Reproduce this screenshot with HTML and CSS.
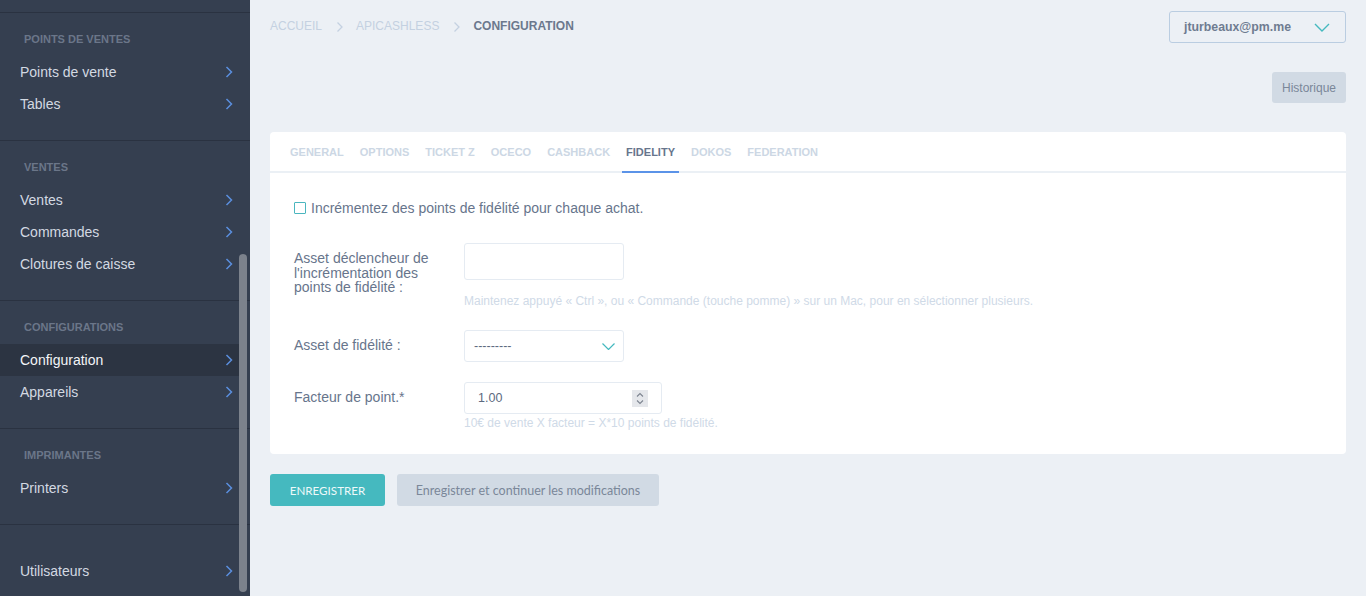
FILE: index.html
```html
<!DOCTYPE html>
<html lang="fr">
<head>
<meta charset="utf-8">
<title>Configuration</title>
<link rel="stylesheet" href="styles.css">
</head>
<body>
<div class="layout">
  <aside class="sidebar">
    <div class="sb-top"></div>
    <section class="sb-section">
      <h3 class="sb-heading">Points de ventes</h3>
      <a class="sb-item">Points de vente<svg class="chev" viewBox="0 0 8 12"><path d="M1.5 1 L6.5 6 L1.5 11"/></svg></a>
      <a class="sb-item">Tables<svg class="chev" viewBox="0 0 8 12"><path d="M1.5 1 L6.5 6 L1.5 11"/></svg></a>
    </section>
    <section class="sb-section">
      <h3 class="sb-heading">Ventes</h3>
      <a class="sb-item">Ventes<svg class="chev" viewBox="0 0 8 12"><path d="M1.5 1 L6.5 6 L1.5 11"/></svg></a>
      <a class="sb-item">Commandes<svg class="chev" viewBox="0 0 8 12"><path d="M1.5 1 L6.5 6 L1.5 11"/></svg></a>
      <a class="sb-item">Clotures de caisse<svg class="chev" viewBox="0 0 8 12"><path d="M1.5 1 L6.5 6 L1.5 11"/></svg></a>
    </section>
    <section class="sb-section">
      <h3 class="sb-heading">Configurations</h3>
      <a class="sb-item active">Configuration<svg class="chev" viewBox="0 0 8 12"><path d="M1.5 1 L6.5 6 L1.5 11"/></svg></a>
      <a class="sb-item">Appareils<svg class="chev" viewBox="0 0 8 12"><path d="M1.5 1 L6.5 6 L1.5 11"/></svg></a>
    </section>
    <section class="sb-section">
      <h3 class="sb-heading">Imprimantes</h3>
      <a class="sb-item">Printers<svg class="chev" viewBox="0 0 8 12"><path d="M1.5 1 L6.5 6 L1.5 11"/></svg></a>
    </section>
    <section class="sb-section sb-last">
      <a class="sb-item">Utilisateurs<svg class="chev" viewBox="0 0 8 12"><path d="M1.5 1 L6.5 6 L1.5 11"/></svg></a>
    </section>
    <div class="sb-scrollbar"></div>
  </aside>

  <main class="main">
    <header class="topbar">
      <nav class="breadcrumb">
        <span class="crumb">Accueil</span>
        <svg class="crumb-sep" viewBox="0 0 8 12"><path d="M1.5 1.5 L6 6 L1.5 10.5"/></svg>
        <span class="crumb">Apicashless</span>
        <svg class="crumb-sep" viewBox="0 0 8 12"><path d="M1.5 1.5 L6 6 L1.5 10.5"/></svg>
        <span class="crumb current">Configuration</span>
      </nav>
      <div class="user-menu">
        <span class="user-name">jturbeaux@pm.me</span>
        <svg class="user-chev" viewBox="0 0 16 9"><path d="M1 1 L8 8 L15 1"/></svg>
      </div>
    </header>

    <div class="actions-row">
      <button class="btn-history">Historique</button>
    </div>

    <div class="card">
      <ul class="tabs">
        <li class="tab">General</li>
        <li class="tab">Options</li>
        <li class="tab">Ticket Z</li>
        <li class="tab">Oceco</li>
        <li class="tab">Cashback</li>
        <li class="tab active">Fidelity</li>
        <li class="tab">Dokos</li>
        <li class="tab">Federation</li>
      </ul>
      <div class="card-body">
        <label class="check-row"><span class="checkbox"></span>Incrémentez des points de fidélité pour chaque achat.</label>

        <div class="field field-1">
          <div class="field-label">Asset déclencheur de l'incrémentation des points de fidélité :</div>
          <div class="field-control">
            <div class="input multi"></div>
            <div class="help help-1">Maintenez appuyé « Ctrl », ou « Commande (touche pomme) » sur un Mac, pour en sélectionner plusieurs.</div>
          </div>
        </div>

        <div class="field field-2">
          <div class="field-label">Asset de fidélité :</div>
          <div class="field-control">
            <div class="input select"><span>---------</span><svg class="sel-chev" viewBox="0 0 13 7"><path d="M0.5 0.5 L6.5 6.5 L12.5 0.5"/></svg></div>
          </div>
        </div>

        <div class="field field-3">
          <div class="field-label">Facteur de point.*</div>
          <div class="field-control">
            <div class="input number"><span>1.00</span>
              <span class="spinner"><svg viewBox="0 0 16 17"><path d="M5 6.5 L8 3.5 L11 6.5 M5 10.5 L8 13.5 L11 10.5"/></svg></span>
            </div>
            <div class="help help-3">10€ de vente X facteur = X*10 points de fidélité.</div>
          </div>
        </div>
      </div>
    </div>

    <div class="form-buttons">
      <button class="btn btn-save">ENREGISTRER</button>
      <button class="btn btn-continue">Enregistrer et continuer les modifications</button>
    </div>
  </main>
</div>
</body>
</html>
```

FILE: styles.css
```css
* { box-sizing: border-box; }
html, body { margin: 0; padding: 0; height: 100%; overflow: hidden; }
body {
  font-family: "Liberation Sans", Arial, sans-serif;
  background: #ecf0f5;
  color: #67758c;
}
.layout { display: flex; height: 596px; }

/* Sidebar */
.sidebar {
  position: relative;
  width: 250px;
  flex: 0 0 250px;
  background: #353f50;
  height: 100%;
}
.sb-top { height: 12px; }
.sb-section {
  border-top: 1px solid #2a3241;
  padding: 16px 0 20px;
  display: flex;
  flex-direction: column;
}
.sb-heading {
  margin: 0 0 7px;
  padding-left: 24px;
  height: 20px;
  line-height: 20px;
  font-size: 11px;
  font-weight: bold;
  text-transform: uppercase;
  color: #6b7689;
}
.sb-last { padding-top: 30px; }
.sb-item {
  display: flex;
  align-items: center;
  justify-content: space-between;
  height: 32px;
  padding: 0 6px 0 20px;
  font-size: 14px;
  color: #d3d9e2;
  margin-right: 11px;
}
.sb-item.active { background: #2c3442; color: #f3f5f8; }
.chev {
  width: 8px; height: 12px;
  fill: none;
  stroke: #5b8fde;
  stroke-width: 1.5;
}
.sb-scrollbar {
  position: absolute;
  left: 239px;
  top: 254px;
  width: 8px;
  height: 338px;
  background: #7c828c;
  border-radius: 4px;
}

/* Main */
.main {
  flex: 1;
  padding: 11px 20px 0;
  display: flex;
  flex-direction: column;
}
.topbar {
  display: flex;
  justify-content: space-between;
  align-items: flex-start;
}
.breadcrumb {
  display: flex;
  align-items: center;
  margin-top: 7px;
  height: 16px;
}
.crumb {
  font-size: 12px;
  text-transform: uppercase;
  color: #c4d1e1;
}
.crumb.current { font-weight: bold; color: #6b788d; }
.crumb-sep {
  width: 8px; height: 12px;
  margin: 1px 12px 0 14px;
  fill: none;
  stroke: #c4d1e1;
  stroke-width: 1.3;
}
.user-menu {
  width: 177px;
  height: 32px;
  border: 1px solid #bacde1;
  border-radius: 3px;
  display: flex;
  align-items: center;
  justify-content: space-between;
  padding: 0 15px 0 14px;
}
.user-name { font-size: 12.3px; font-weight: bold; color: #6f7c91; }
.user-chev {
  width: 16px; height: 9px;
  fill: none;
  stroke: #45b9bf;
  stroke-width: 1.4;
}

.actions-row {
  display: flex;
  justify-content: flex-end;
  margin-top: 29px;
}
.btn-history {
  width: 74px;
  height: 31px;
  border: none;
  border-radius: 3px;
  background: #d1dae4;
  color: #7a8799;
  font-family: "Liberation Sans", Arial, sans-serif;
  font-size: 12px;
  padding: 0;
}

.card {
  margin-top: 29px;
  background: #fff;
  border-radius: 4px;
}
.tabs {
  list-style: none;
  margin: 0;
  padding: 0 0 0 16px;
  display: flex;
  border-bottom: 2px solid #ebf0f5;
  height: 41px;
}
.tab {
  padding: 0 4px;
  margin-right: 8px;
  height: 41px;
  line-height: 40px;
  font-size: 11px;
  font-weight: bold;
  text-transform: uppercase;
  color: #ccd7e4;
}
.tab.active {
  color: #67758c;
  border-bottom: 2px solid #5b93e8;
}

.card-body { padding: 27px 24px 24px; }
.check-row {
  display: flex;
  align-items: center;
  font-size: 14px;
  height: 16px;
  color: #67758c;
}
.checkbox {
  width: 12px; height: 12px;
  border: 1.5px solid #4ab6bf;
  border-radius: 1px;
  margin-right: 5px;
  margin-top: -1px;
}
.field { display: flex; align-items: flex-start; }
.field-1 { margin-top: 27px; }
.field-2 { margin-top: 22px; }
.field-3 { margin-top: 20px; }
.field-label {
  width: 170px;
  flex: 0 0 170px;
  padding-right: 20px;
  padding-top: 8px;
  font-size: 14px;
  line-height: 14.5px;
  color: #67758c;
}
.field-control { display: flex; flex-direction: column; }
.input {
  border: 1px solid #e5ebf2;
  border-radius: 3px;
  background: #fff;
  font-size: 12.5px;
  color: #5d6a80;
  display: flex;
  align-items: center;
}
.input.multi { width: 160px; height: 37px; }
.input.select {
  width: 160px; height: 32px;
  padding: 0 8px 0 9px;
  justify-content: space-between;
}
.sel-chev {
  width: 13px; height: 7px;
  fill: none;
  stroke: #45b9bf;
  stroke-width: 1.2;
}
.input.number {
  width: 198px; height: 32px;
  padding: 0 13px 0 13px;
  justify-content: space-between;
}
.spinner {
  width: 16px; height: 17px;
  background: #e5e7eb;
}
.spinner svg {
  display: block;
  width: 16px; height: 17px;
  fill: none;
  stroke: #7d8490;
  stroke-width: 1.1;
}
.help {
  font-size: 12px;
  line-height: 14px;
  color: #cfdae7;
  white-space: nowrap;
}
.help-1 { margin-top: 14px; }
.help-3 { margin-top: 2px; }

.form-buttons {
  display: flex;
  gap: 12px;
  margin-top: 20px;
}
.btn {
  height: 32px;
  border: none;
  border-radius: 3px;
  font-family: Lato, "Open Sans", sans-serif;
  font-size: 12.5px;
  padding: 0;
}
.btn-save { width: 115px; background: #45b9bf; color: #eef9fa; font-size: 11.6px; }
.btn-continue { width: 262px; background: #d1dae4; color: #7a8799; }
```
